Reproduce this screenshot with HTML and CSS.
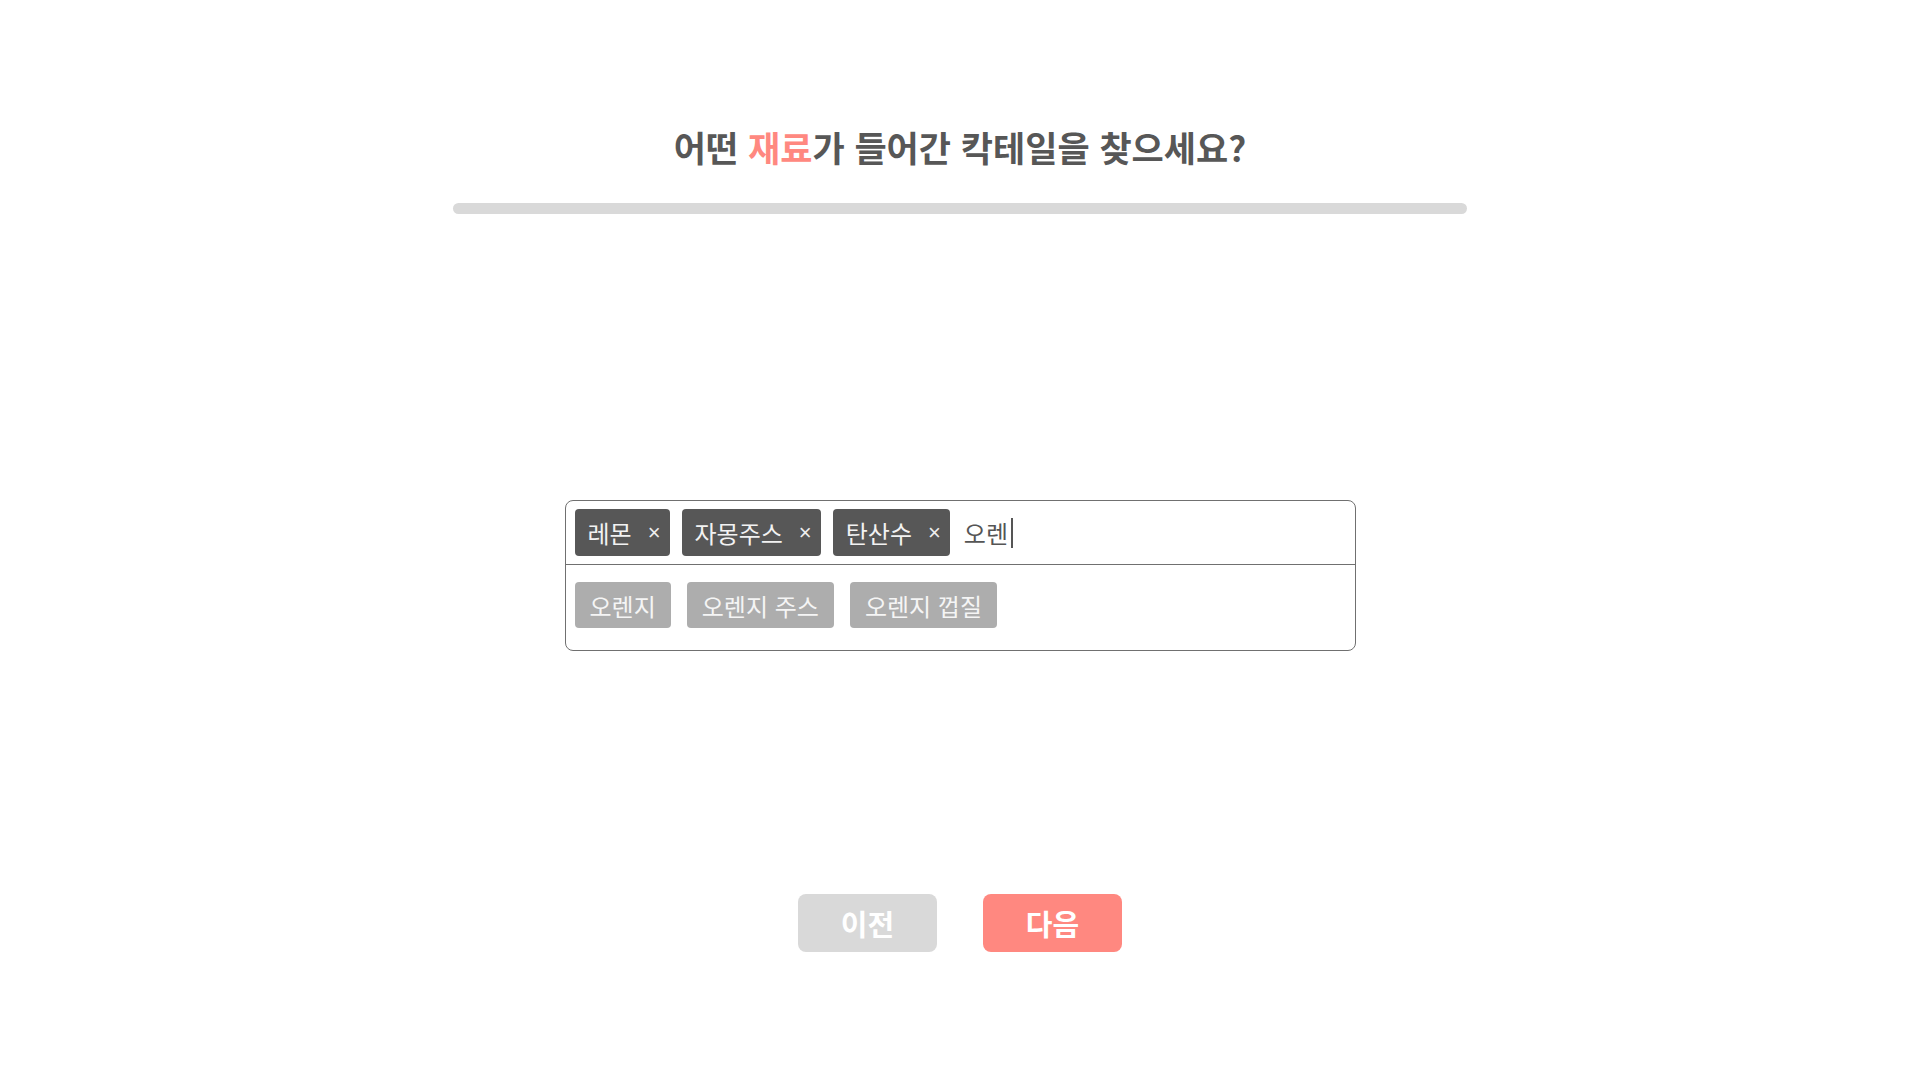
FILE: index.html
```html
<!DOCTYPE html>
<html lang="ko">
<head>
<meta charset="utf-8">
<title>칵테일 찾기</title>
<link rel="stylesheet" href="styles.css">
</head>
<body>
<main class="page">
  <h1 class="title">어떤 <span class="accent">재료</span>가 들어간 칵테일을 찾으세요?</h1>
  <div class="progress"><div class="progress-fill"></div></div>

  <section class="picker">
    <div class="picker-input">
      <span class="tag"><span class="tag-label">레몬</span><span class="tag-x">×</span></span>
      <span class="tag"><span class="tag-label">자몽주스</span><span class="tag-x">×</span></span>
      <span class="tag"><span class="tag-label">탄산수</span><span class="tag-x">×</span></span>
      <span class="typed">오렌<span class="caret"></span></span>
    </div>
    <div class="picker-suggest">
      <span class="suggest">오렌지</span>
      <span class="suggest">오렌지 주스</span>
      <span class="suggest">오렌지 껍질</span>
    </div>
  </section>

  <div class="nav">
    <button class="btn btn-prev">이전</button>
    <button class="btn btn-next">다음</button>
  </div>
</main>
</body>
</html>
```
FILE: styles.css
```css
html, body {
  margin: 0;
  padding: 0;
  background: #ffffff;
}
body {
  font-family: "Noto Sans CJK KR", "Noto Sans", sans-serif;
  color: #555555;
}
.page {
  display: flex;
  flex-direction: column;
  align-items: center;
  padding-top: 123px;
}
.title {
  margin: 0;
  font-size: 35px;
  line-height: 48px;
  font-weight: 700;
  color: #575757;
}
.accent {
  color: #ff8880;
}
.progress {
  margin-top: 32px;
  width: 1014px;
  height: 11px;
  border-radius: 6px;
  background: #d9d9d9;
}
.picker {
  margin-top: 286px;
  width: 791px;
  box-sizing: border-box;
  border: 1px solid #707070;
  border-radius: 8px;
}
.picker-input {
  display: flex;
  align-items: center;
  gap: 12px;
  padding: 8px 9px;
  border-bottom: 1px solid #707070;
  height: 47px;
}
.tag {
  display: flex;
  align-items: center;
  height: 47px;
  box-sizing: border-box;
  padding: 0 9px 0 13px;
  background: #575757;
  border-radius: 4px;
  color: #f2f2f2;
  font-size: 24px;
}
.tag-x {
  margin-left: 16px;
  font-family: "Liberation Sans", sans-serif;
  font-size: 22px;
  color: #eeeeee;
}
.typed {
  display: flex;
  align-items: center;
  margin-left: 2px;
  font-size: 24px;
  color: #555555;
}
.caret {
  display: inline-block;
  width: 1.5px;
  height: 30px;
  margin-left: 3px;
  background: #555555;
}
.picker-suggest {
  display: flex;
  gap: 16px;
  padding: 17px 9px 22px;
}
.suggest {
  display: flex;
  align-items: center;
  height: 46px;
  box-sizing: border-box;
  padding: 0 15px;
  background: #adadad;
  border-radius: 4px;
  color: #f5f5f5;
  font-size: 24px;
}
.nav {
  margin-top: 243px;
  display: flex;
  gap: 46px;
}
.btn {
  width: 139px;
  height: 58px;
  border: none;
  border-radius: 8px;
  font-family: "Noto Sans CJK KR", "Noto Sans", sans-serif;
  font-size: 29px;
  font-weight: 700;
  color: #ffffff;
  padding: 0;
}
.btn-prev {
  background: #d9d9d9;
}
.btn-next {
  background: #ff8880;
}
```
